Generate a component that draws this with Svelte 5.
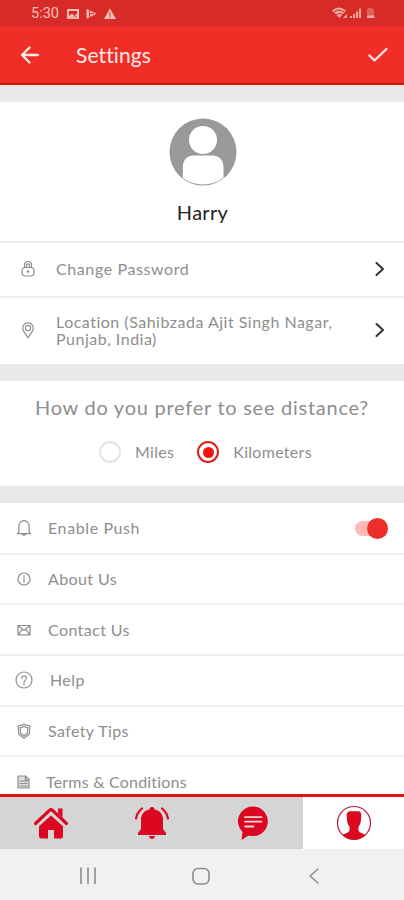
<script>
  /** Profile settings screen with bottom tab navigation. */

  const accountRows = [
    { icon: "lock", label: "Change Password" },
    { icon: "pin", label: "Location (Sahibzada Ajit Singh Nagar,\nPunjab, India)" },
  ];

  const menuRows = [
    { icon: "bell", label: "Enable Push" },
    { icon: "info", label: "About Us" },
    { icon: "mail", label: "Contact Us" },
    { icon: "help", label: "Help" },
    { icon: "shield", label: "Safety Tips" },
    { icon: "doc", label: "Terms & Conditions" },
  ];

  const units = ["Miles", "Kilometers"];
  const tabs = ["home", "alerts", "chat", "profile"];

  let unit = $state("Kilometers");
  let push = $state(true);
  let activeTab = $state("profile");
</script>

{#snippet icon(name)}
  <svg class="icon" viewBox="0 0 18 18" aria-hidden="true">
    {#if name === "lock"}
      <rect x="3" y="7.5" width="12" height="8.5" rx="3.2" />
      <path d="M5.5 7.5V5a3.5 3.5 0 0 1 7 0v2.5M7.5 7.300V5.300a1.500 1.500 0 0 1 3 0v2" />
      <circle class="dot" cx="9" cy="11.5" r="1.3" />
    {:else if name === "pin"}
      <path d="M9 17C7.5 14 3.8 10.500 3.800 7a5.200 5.200 0 0 1 10.400 0C14.200 10.500 10.500 14 9 17z" />
      <circle cx="9" cy="7" r="2.600" />
    {:else if name === "bell"}
      <path d="M3.800 13.200V7.500a5.200 5.800 0 0 1 10.400 0v5.700l1.300 1.500h-13zM7 15.200q2 2.400 4 0" />
    {:else if name === "info"}
      <circle cx="9" cy="9" r="6" />
      <path d="M9 8v4.200M9 5.500v1.300" />
    {:else if name === "mail"}
      <path d="M3 4.500h12v9.300H3zM3 4.500l6 5 6-5M3 13.800l4.400-5.500M15 13.800l-4.400-5.500" />
    {:else if name === "help"}
      <circle cx="9" cy="9" r="8" />
      <path d="M6.600 7.200a2.400 2.400 0 1 1 3.800 2C9.300 9.900 9 10.200 9 11.200M9 12.500v1.400" />
    {:else if name === "shield"}
      <path d="M9 2l2 1.200 3.800.3-.5 8.500L9 16.300 3.700 12l-.5-8.500L7 3.200z" />
      <path d="M9 4.300l1.500.8 2.300.2-.4 5.700L9 14l-3.400-3-.4-5.700 2.300-.2z" />
    {:else if name === "doc"}
      <path class="fill" d="M3 3h7.500L14 6.500V15H3z" />
      <path d="M10.500 3v4H14M5 8h7M5 10.500h7M5 13h7" />
    {/if}
  </svg>
{/snippet}

<div class="screen">
  <div class="status">
    <span class="clock">5:30</span>
    <svg class="notes" viewBox="0 0 50 12" aria-hidden="true">
      <path fill-rule="evenodd" d="M0 1h12v10H0zM2 3v5l3-2.500L7.500 8 10 5.500V3zM2 9.300h8V8.500z" />
      <path d="M19.500 1l10 4.800-10 5z" />
      <path class="cut" d="M22.500 3v6M22.500 6l4-.5" />
      <path d="M43 .5l6 10.500H37z" />
      <path class="cut" d="M43 4.500v3M43 8.800v.5" />
    </svg>
    <svg class="signals" viewBox="0 0 44 13" aria-hidden="true">
      <path d="M0 3.500q7-6 14 0L7.500 11z" />
      <path class="cut" d="M2 5q5-4 10 0M4.500 7.500q3-2.500 6 0" />
      <path d="M11 11l4-4v4zM18 11V9h2v2zM21 11V7h2v4zM24 11V4.500h2V11zM27 11V1.500h2V11z" />
      <path class="faded" d="M36 1h4v1h2v7h-7V2h1z" />
      <path d="M35 8.500h7.500V11H35z" />
    </svg>
  </div>

  <header>
    <button class="back" aria-label="Back">
      <svg viewBox="0 0 18 18"><path d="M17 9H1.500M8.500 1.500L1 9l7.500 7.500" /></svg>
    </button>
    <h1>Settings</h1>
    <button class="save" aria-label="Save">
      <svg viewBox="0 0 20 16"><path d="M1.500 8.500l5 5L18.500 2" /></svg>
    </button>
  </header>

  <main>
    <section class="account">
      <div class="user">
        <svg class="avatar" viewBox="0 0 68 68" aria-hidden="true">
          <circle cx="34" cy="34" r="33.500" fill="#999" />
          <circle cx="34" cy="22" r="14" fill="#fff" />
          <path d="M13.800 60V50Q13.800 37.500 25.500 37.500H42.500Q54.500 37.500 54.500 50V60Q45 66.500 34 66.500T13.800 60z" fill="#fff" />
        </svg>
        <div class="name">Harry</div>
      </div>
      {#each accountRows as row}
        <button class="account-row {row.icon}">
          {@render icon(row.icon)}
          <span class="account-label">{row.label}</span>
          <svg class="chevron" viewBox="0 0 10 16" aria-hidden="true"><path d="M1.500 2L8 8l-6.500 6" /></svg>
        </button>
      {/each}
    </section>

    <section class="distance">
      <h2>How do you prefer to see distance?</h2>
      <div class="units">
        {#each units as u}
          <button class="unit" role="radio" aria-checked={unit === u} onclick={() => (unit = u)}>
            <span class="radio" class:checked={unit === u}></span>
            <span>{u}</span>
          </button>
        {/each}
      </div>
    </section>

    <section class="menu">
      {#each menuRows as row}
        <div class="menu-row {row.icon}">
          {@render icon(row.icon)}
          <span class="label">{row.label}</span>
          {#if row.icon === "bell"}
            <button class="toggle" class:on={push} aria-label="Enable Push" onclick={() => (push = !push)}>
              <span class="knob"></span>
            </button>
          {/if}
        </div>
      {/each}
    </section>
  </main>

  <nav>
    {#each tabs as tab}
      <button class="tab" class:active={activeTab === tab} aria-label={tab} onclick={() => (activeTab = tab)}>
        <svg viewBox="0 0 36 36" aria-hidden="true">
          {#if tab === "home"}
            <path d="M18 10.500l12 10.800V31a2.500 2.500 0 0 1-2.500 2.500H21V25h-6v8.500H8.500A2.500 2.500 0 0 1 6 31v-9.700z" />
            <path class="line" d="M2.500 18.500L16.500 5.300q1.500-1.400 3 0L33.500 18.500" />
            <path d="M25 3.500h4.500v9L25 8.300z" />
          {:else if tab === "alerts"}
            <path d="M18 2a2.500 2.500 0 0 1 2.500 2.500C26 5.500 29 9.500 29 14.500V24l3 4v2H4v-2l3-4v-9.500c0-5 3-9 8.500-10A2.500 2.500 0 0 1 18 2zM15 31h6q-.5 3-3 3t-3-3z" />
            <path class="wave" d="M8 3.500Q3 7.500 2 13.500M28 3.500q5 4 6 10" />
          {:else if tab === "chat"}
            <path d="M18 1.500a14.800 14.800 0 1 1-4.500 28.900L6.500 35l1-8A14.800 14.800 0 0 1 18 1.500z" />
            <path class="text-lines" d="M10 12.200h16.500M10 16.700h16.500M10 21.500h8.500" />
          {:else}
            <circle class="ring" cx="18" cy="18" r="16.500" />
            <path d="M14 6.300h8q3.500.2 3.300 4.200l-.5 6q-.3 3-2.300 5.500v3.500q.5 2 4 3l2.800 1.200Q24.500 34.500 18 34.500T6.700 29.700L9.500 28.500q3.500-1 4-3V22q-2-2.500-2.300-5.500l-.5-6Q10.500 6.500 14 6.300z" />
          {/if}
        </svg>
      </button>
    {/each}
  </nav>

  <div class="system">
    <svg viewBox="0 0 18 18" aria-hidden="true"><path d="M2 1v15.500M9 1v15.500M16 1v15.500" /></svg>
    <svg viewBox="0 0 18 18" aria-hidden="true"><rect x="1" y="1.500" width="16" height="15.500" rx="5" /></svg>
    <svg viewBox="0 0 18 18" aria-hidden="true"><path d="M13 2L5 9l8 7" /></svg>
  </div>
</div>

<style>
  :global(body) { background: #f1f1f1; }
  .screen {
    display: flex;
    flex-direction: column;
    width: 404px;
    height: 900px;
    overflow: hidden;
    background: #e9e9e9;
    color: #8e8e8e;
    font-family: Lato, "Open Sans", sans-serif;
    font-variant-ligatures: none;
  }
  svg {
    display: block;
    flex: none;
    fill: none;
    stroke-linecap: round;
    stroke-linejoin: round;
  }
  button {
    padding: 0;
    border: none;
    background: none;
    color: inherit;
    font: inherit;
    font-variant-ligatures: none;
    text-align: left;
    cursor: pointer;
  }
  h1, h2 { margin: 0; font-weight: 400; }

  .status {
    display: flex;
    flex: none;
    align-items: center;
    box-sizing: border-box;
    height: 26px;
    padding: 1px 28px 0 31px;
    background: #d62b27;
    color: #f8c0b9;
  }
  .clock {
    width: 36px;
    font-family: Roboto, sans-serif;
    font-size: 14.500px;
  }
  .status svg { fill: #f6beb6; }
  .status .notes { width: 50px; height: 12px; }
  .status .signals { width: 44px; height: 13px; margin-left: auto; fill: #eca79c; }
  .status .cut { fill: none; stroke: #d62b27; stroke-width: 1; }
  .status .faded { opacity: 0.45; }

  header {
    display: flex;
    flex: none;
    align-items: center;
    box-sizing: border-box;
    height: 59px;
    padding: 1px 16px 0 21px;
    border-bottom: 2px solid #d9150f;
    background: #f02d27;
    color: #ffe9e5;
  }
  header svg { stroke: #ffeae6; stroke-width: 2.300; }
  .back svg { width: 18px; height: 18px; }
  h1 {
    margin-left: 37px;
    font-size: 21px;
    letter-spacing: 0.1px;
    line-height: 26px;
  }
  .save { margin-left: auto; }
  .save svg { width: 20px; height: 16px; }

  main {
    display: flex;
    flex: 1;
    flex-direction: column;
    gap: 17px;
    min-height: 0;
    padding-top: 17px;
    overflow: hidden;
  }
  section { flex: none; background: #fff; }
  .user {
    display: flex;
    flex-direction: column;
    align-items: center;
    height: 139px;
    padding-left: 1px;
  }
  .avatar { width: 68px; height: 68px; margin-top: 16px; }
  .name {
    margin-top: 13px;
    color: #222;
    font-size: 20px;
    letter-spacing: 0.3px;
    line-height: 26px;
  }
  .icon {
    width: 18px;
    height: 18px;
    stroke: #8e8e8e;
    stroke-width: 1.200;
  }
  .icon .dot { fill: #8b8b8b; stroke: none; }
  .icon .fill { fill: #ddd; }
  .account-row {
    display: flex;
    align-items: center;
    box-sizing: border-box;
    width: 100%;
    height: 55px;
    padding: 0 19px 2px;
    border-top: 2px solid #ececec;
    font-size: 16px;
    line-height: 17px;
  }
  .account-row.pin { height: 68px; }
  .account-label {
    flex: 1;
    margin-left: 19px;
    letter-spacing: 0.500px;
    white-space: pre;
  }
  .lock .account-label { letter-spacing: 0.600px; }
  .chevron { width: 10px; height: 16px; stroke: #333; stroke-width: 2; }

  .distance { height: 105px; text-align: center; }
  h2 {
    padding-top: 13px;
    font-size: 20px;
    letter-spacing: 0.740px;
    line-height: 26px;
    white-space: nowrap;
  }
  .units {
    display: flex;
    gap: 23px;
    margin: 21px 0 0 99px;
  }
  .unit {
    display: flex;
    align-items: center;
    font-size: 16px;
    letter-spacing: 0.300px;
    line-height: 22px;
  }
  .radio {
    display: grid;
    place-items: center;
    box-sizing: border-box;
    width: 22px;
    height: 22px;
    margin-right: 14px;
    border: 2px solid #e5e5e5;
    border-radius: 50%;
  }
  .radio.checked { border-color: #db2018; }
  .radio.checked::after {
    width: 11px;
    height: 11px;
    border-radius: 50%;
    background: #f0140f;
    content: "";
  }

  .menu { padding-top: 1px; }
  .menu-row {
    display: flex;
    align-items: center;
    box-sizing: border-box;
    height: 50.700px;
    padding: 0 16px 0 15px;
    border-bottom: 2px solid #efefef;
    font-size: 16px;
    letter-spacing: 0.400px;
    line-height: 20px;
  }
  .label { margin-left: 15px; white-space: nowrap; }
  .bell .label { letter-spacing: 0.600px; }
  .help .label { margin-left: 17px; }
  .doc .label { margin-left: 13px; letter-spacing: 0.200px; }
  .toggle {
    display: flex;
    align-items: center;
    justify-content: flex-start;
    width: 33px;
    height: 15px;
    margin-left: auto;
    border-radius: 8px;
    background: #ddd;
  }
  .toggle.on { justify-content: flex-end; background: #ffb9b7; }
  .knob { flex: none; width: 21px; height: 21px; border-radius: 50%; background: #aaa; }
  .toggle.on .knob { background: #ec2f2a; }

  nav {
    display: flex;
    flex: none;
    box-sizing: border-box;
    height: 55px;
    border-top: 3px solid #e0140f;
    background: #d5d5d5;
  }
  .tab {
    display: flex;
    flex: 1;
    align-items: center;
    justify-content: center;
  }
  .tab.active { background: #fff; }
  .tab svg { width: 36px; height: 36px; fill: #dc0720; }
  .tab .line { fill: none; stroke: #dc0720; stroke-width: 3.200; }
  .tab .wave { fill: none; stroke: #dc0720; stroke-width: 2.200; }
  .tab .text-lines { stroke: #fbd5d6; stroke-width: 1.800; }
  .tab .ring { fill: #fff; stroke: #b51c38; stroke-width: 1.200; }

  .system {
    display: flex;
    flex: none;
    align-items: center;
    justify-content: space-between;
    box-sizing: border-box;
    height: 51px;
    padding: 2px 81px 0 79px;
    background: #f1f1f1;
  }
  .system svg { width: 18px; height: 18px; stroke: #8c8c8c; stroke-width: 1.600; }
</style>
